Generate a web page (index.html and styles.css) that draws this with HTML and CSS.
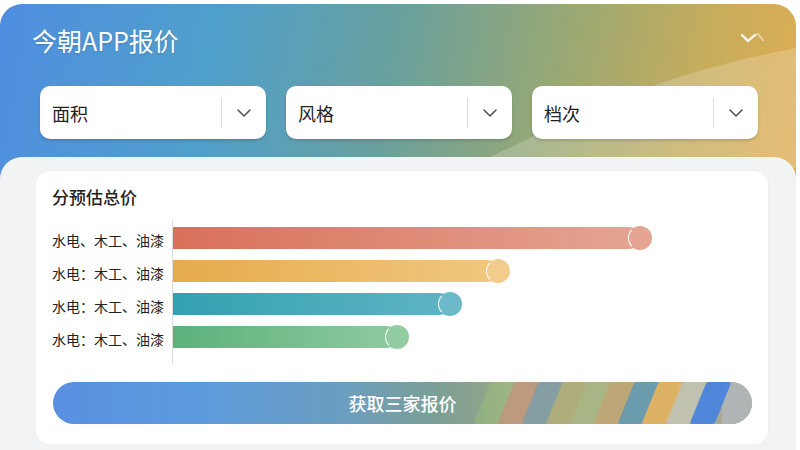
FILE: index.html
```html
<!DOCTYPE html>
<html lang="zh-CN">
<head>
  <meta charset="UTF-8">
  <meta name="viewport" content="width=device-width, initial-scale=1.0">
  <title>今朝APP报价</title>
  <link rel="stylesheet" href="styles.css">
</head>
<body>

  <div class="app">
    <svg class="wave" width="330" height="130" viewBox="0 0 330 130">
      <path d="M0 130 C 90 90, 170 40, 330 10 L 330 130 Z" fill="rgba(255,255,255,0.2)"/>
    </svg>

    <div class="head">
      <div class="title-row">
        <h1 class="title">今朝APP报价</h1>
        <svg class="fold" width="26" height="12" viewBox="0 0 26 12">
          <polyline points="2,3 8,9 15,3" fill="none" stroke="#fff" stroke-width="2.2" stroke-linecap="round" stroke-linejoin="round"/>
          <polyline points="15,3 18,2 23,8" fill="none" stroke="rgba(255,255,255,0.45)" stroke-width="2" stroke-linecap="round" stroke-linejoin="round"/>
        </svg>
      </div>

      <div class="filters">
        <div class="select">
          <span class="select-label">面积</span>
          <span class="select-arrow">
            <svg width="14" height="8" viewBox="0 0 14 8"><polyline points="1,1 7,7 13,1" fill="none" stroke="#555" stroke-width="1.6" stroke-linecap="round" stroke-linejoin="round"/></svg>
          </span>
        </div>
        <div class="select">
          <span class="select-label">风格</span>
          <span class="select-arrow">
            <svg width="14" height="8" viewBox="0 0 14 8"><polyline points="1,1 7,7 13,1" fill="none" stroke="#555" stroke-width="1.6" stroke-linecap="round" stroke-linejoin="round"/></svg>
          </span>
        </div>
        <div class="select">
          <span class="select-label">档次</span>
          <span class="select-arrow">
            <svg width="14" height="8" viewBox="0 0 14 8"><polyline points="1,1 7,7 13,1" fill="none" stroke="#555" stroke-width="1.6" stroke-linecap="round" stroke-linejoin="round"/></svg>
          </span>
        </div>
      </div>
    </div>

    <div class="panel">
      <div class="card">
        <h2 class="card-title">分预估总价</h2>

        <div class="chart">
          <div class="labels">
            <div class="label">水电、木工、油漆</div>
            <div class="label">水电：木工、油漆</div>
            <div class="label">水电：木工、油漆</div>
            <div class="label">水电：木工、油漆</div>
          </div>
          <div class="bars">
            <div class="bar-row"><div class="bar bar-red" style="width: 467px"></div></div>
            <div class="bar-row"><div class="bar bar-orange" style="width: 325px"></div></div>
            <div class="bar-row"><div class="bar bar-teal" style="width: 277px"></div></div>
            <div class="bar-row"><div class="bar bar-green" style="width: 224px"></div></div>
          </div>
        </div>

        <button class="quote-btn">
          <span class="quote-text">获取三家报价</span>
          <span class="stripes">
            <i style="background: rgba(150,190,120,0.5)"></i>
            <i style="background: rgba(205,140,110,0.55)"></i>
            <i style="background: rgba(110,150,175,0.6)"></i>
            <i style="background: rgba(180,175,110,0.6)"></i>
            <i style="background: rgba(170,190,120,0.55)"></i>
            <i style="background: rgba(205,165,100,0.6)"></i>
            <i style="background: rgba(80,150,185,0.7)"></i>
            <i style="background: rgba(235,180,90,0.8)"></i>
            <i style="background: rgba(195,195,180,0.9)"></i>
            <i style="background: rgba(70,130,225,0.9)"></i>
          </span>
        </button>
      </div>
    </div>
  </div>

</body>
</html>
```

FILE: styles.css
```css
body {
  margin: 0;
  background-color: #fff;
  font-family: "Noto Sans CJK SC", "Noto Sans", sans-serif;
}
.app {
  position: relative;
  width: 796px;
  height: 446px;
  margin-top: 4px;
  display: flex;
  flex-direction: column;
  border-radius: 22px 22px 0 0;
  overflow: hidden;
  background: linear-gradient(100deg, #4f8ee0 0%, #4f9fcc 25%, #67a0a0 45%, #98a874 65%, #c7ad5c 82%, #e9ad4f 100%);
}
.wave {
  position: absolute;
  right: 0;
  top: 34px;
}
.head {
  position: relative;
  padding: 18px 40px 0 40px;
  height: 150px;
  box-sizing: border-box;
}
.title-row {
  display: flex;
  align-items: center;
  justify-content: space-between;
  margin-left: -8px;
  margin-right: -10px;
}
.title {
  margin: 0;
  color: #fff;
  font-size: 25px;
  font-weight: 400;
  line-height: 36px;
  text-shadow: 0 1px 2px rgba(0, 0, 0, 0.15);
}
.fold {
  margin-top: -4px;
}
.filters {
  display: grid;
  grid-template-columns: repeat(3, 226px);
  gap: 20px;
  margin-top: 28px;
}
.select {
  display: flex;
  align-items: center;
  height: 52px;
  background-color: #fff;
  border-radius: 10px;
  box-shadow: 0 2px 3px rgba(0, 0, 0, 0.14);
  border-top: 1px solid rgba(255, 255, 255, 0.7);
}
.select-label {
  flex: 1;
  padding-left: 12px;
  font-size: 18px;
  color: #222;
}
.select-arrow {
  display: flex;
  align-items: center;
  justify-content: center;
  width: 44px;
  height: 30px;
  border-left: 1.5px solid #ddd;
}
.panel {
  position: relative;
  flex: 1;
  margin-top: 3px;
  padding: 14px 28px 4px 36px;
  background-color: #f2f3f5;
  border-radius: 22px 22px 0 0;
}
.card {
  background-color: #fff;
  border-radius: 14px;
  padding: 12px 16px 20px 16px;
  box-shadow: 0 0 3px rgba(0, 0, 0, 0.04);
}
.card-title {
  margin: 0;
  font-size: 17px;
  font-weight: 500;
  color: #222;
  line-height: 28px;
}
.chart {
  display: flex;
  margin-top: 9px;
}
.labels {
  width: 111px;
  padding-top: 8px;
  padding-right: 9px;
}
.label {
  height: 33px;
  line-height: 24px;
  text-align: right;
  font-size: 14px;
  white-space: nowrap;
  color: #222;
}
.bars {
  border-left: 1px solid #ddd;
  padding-top: 6px;
  padding-bottom: 6px;
}
.bar-row {
  height: 33px;
  display: flex;
  align-items: flex-start;
}
.bar {
  position: relative;
  height: 22px;
  border-radius: 0 11px 11px 0;
  margin-top: 1px;
}
.bar::after {
  content: "";
  position: absolute;
  right: -12px;
  top: -1px;
  width: 22px;
  height: 22px;
  border-radius: 50%;
  border: 1px solid transparent;
  border-left-color: #fff;
}
.bar-red {
  background: linear-gradient(90deg, #d9705a, #e4a592);
}
.bar-red::after {
  background-color: #e6a592;
}
.bar-orange {
  background: linear-gradient(90deg, #e6ab4c, #f0c880);
}
.bar-orange::after {
  background-color: #f1cc8a;
}
.bar-teal {
  background: linear-gradient(90deg, #33a1b0, #5fb4c4);
}
.bar-teal::after {
  background-color: #6cb9c9;
}
.bar-green {
  background: linear-gradient(90deg, #5bb27a, #8fcb9f);
}
.bar-green::after {
  background-color: #92cda2;
}
.quote-btn {
  position: relative;
  display: flex;
  align-items: center;
  justify-content: center;
  width: 699px;
  height: 42px;
  margin-top: 18px;
  margin-left: 1px;
  padding: 0;
  border: none;
  border-radius: 21px;
  overflow: hidden;
  background: linear-gradient(90deg, #5a8fe0 0%, #5c9ade 20%, #6b9ebf 42%, #7c9f95 55%, #9aa887 66%, #a6ab94 100%);
  font-family: inherit;
}
.quote-text {
  position: relative;
  z-index: 1;
  color: #fff;
  font-size: 18px;
  font-weight: 500;
}
.stripes {
  position: absolute;
  top: 0;
  bottom: 0;
  right: 0;
  width: 270px;
  display: flex;
  padding-right: 30px;
  box-sizing: border-box;
  background: linear-gradient(90deg, rgba(160,170,130,0) 0, #a8ab92 30px, #a8ab92 240px, #b1b4b4 240px);
}
.stripes i {
  display: block;
  flex: 1;
  transform: skewX(-22deg);
  border-radius: 3px;
  margin-right: -1px;
}
```
